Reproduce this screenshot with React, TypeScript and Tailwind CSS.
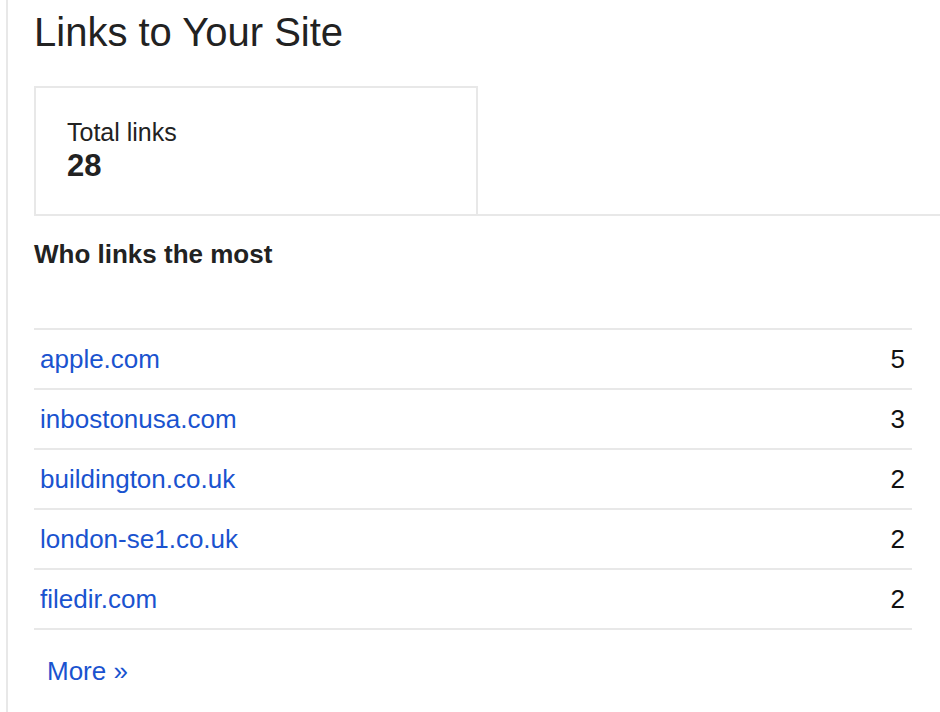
import React from "react";

const rows: [string, number][] = [
  ["apple.com", 5],
  ["inbostonusa.com", 3],
  ["buildington.co.uk", 2],
  ["london-se1.co.uk", 2],
  ["filedir.com", 2],
];

export default function App() {
  return (
    <div
      className="min-h-[712px] w-[940px] bg-white"
      style={{ fontFamily: '"Liberation Sans", Arial, Helvetica, sans-serif' }}
    >
      <div className="ml-[6px] min-h-[712px] border-l-2 border-[#e8e8e8] pl-[26px]">
        <h1 className="pt-[12px] text-[40px] leading-[40px] font-normal text-[#222]">
          Links to Your Site
        </h1>
        <div className="mt-[34px] border-b-2 border-[#e8e8e8]">
          <div className="h-[128px] w-[444px] border-2 border-b-0 border-[#e8e8e8] pl-[31px] pt-[30px]">
            <div className="text-[25px] leading-[28px] text-[#222]">Total links</div>
            <div className="mt-[4px] text-[31px] leading-[32px] font-bold text-[#222]">28</div>
          </div>
        </div>
        <h2 className="mt-[23px] text-[26px] leading-[30px] font-bold text-[#222]">
          Who links the most
        </h2>
        <div className="mt-[59px] mr-[28px] border-b-2 border-[#e8e8e8]">
          {rows.map(([site, n]) => (
            <div
              key={site}
              className="flex h-[60px] items-center justify-between border-t-2 border-[#e8e8e8] pl-[6px] pr-[7px]"
            >
              <a className="text-[26px] leading-[30px] text-[#1a53cf]" href="#">
                {site}
              </a>
              <span className="text-[26px] leading-[30px] text-[#111]">{n}</span>
            </div>
          ))}
        </div>
        <div className="mt-[26px] pl-[13px]">
          <a className="text-[26px] leading-[30px] text-[#1a53cf]" href="#">
            More »
          </a>
        </div>
      </div>
    </div>
  );
}
